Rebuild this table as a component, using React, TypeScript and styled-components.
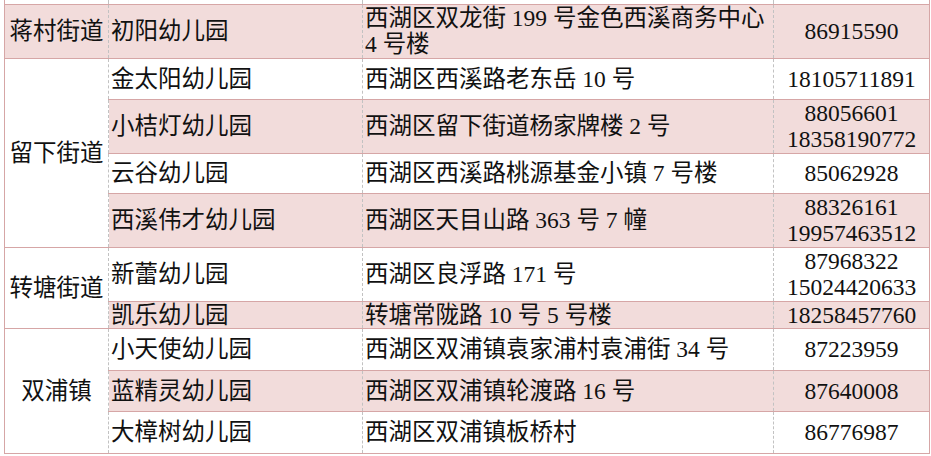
import React from "react";
import styled, { createGlobalStyle } from "styled-components";

const GlobalStyle = createGlobalStyle`
  html, body { margin: 0; padding: 0; background: #ffffff; }
  body {
    font-family: "Liberation Serif", "Noto Sans CJK SC", serif;
    color: #111111;
  }
`;

const ROSE = "#d6a6a6";
const DASH = "#c2c2c2";
const PINK = "#f2dcdb";

const Page = styled.div`
  padding: 0 0 0 4px;
  width: 931px;
  height: 456px;
  box-sizing: border-box;
  overflow: hidden;
`;

const Table = styled.table`
  border-collapse: collapse;
  table-layout: fixed;
  width: 925px;
  font-size: 23.5px;
  line-height: 26px;
`;

const Row = styled.tr<{ $h: number }>`
  height: ${(p) => p.$h}px;
`;

const Cell = styled.td<{ $fill?: boolean }>`
  padding: 0;
  vertical-align: middle;
  white-space: nowrap;
  background: ${(p) => (p.$fill ? PINK : "#ffffff")};
  border-top: 1px solid ${ROSE};
  border-bottom: 1px solid ${ROSE};
  border-left: 1px dashed ${DASH};
  border-right: 1px dashed ${DASH};
`;

const StubCell = styled(Cell)`
  border-top: none;
  height: 3px;
  line-height: 0;
  font-size: 0;
`;

const SectionCell = styled(Cell)`
  text-align: center;
  border-left: 1px solid ${ROSE};
`;

const NameCell = styled(Cell)`
  text-align: left;
  padding-left: 2px;
`;

const AddrCell = styled(Cell)`
  text-align: left;
  padding-left: 2px;
`;

const PhoneCell = styled(Cell)`
  text-align: center;
  border-right: 1px solid ${ROSE};
`;

const Line = styled.div``;

type Entry = { n: string; a: string[]; p: string[]; h: number };
type Section = { name: string; rows: Entry[] };

const sections: Section[] = [
  {
    name: "蒋村街道",
    rows: [
      {
        n: "初阳幼儿园",
        a: ["西湖区双龙街 199 号金色西溪商务中心", "4 号楼"],
        p: ["86915590"],
        h: 54,
      },
    ],
  },
  {
    name: "留下街道",
    rows: [
      { n: "金太阳幼儿园", a: ["西湖区西溪路老东岳 10 号"], p: ["18105711891"], h: 41 },
      {
        n: "小桔灯幼儿园",
        a: ["西湖区留下街道杨家牌楼 2 号"],
        p: ["88056601", "18358190772"],
        h: 54,
      },
      { n: "云谷幼儿园", a: ["西湖区西溪路桃源基金小镇 7 号楼"], p: ["85062928"], h: 40 },
      {
        n: "西溪伟才幼儿园",
        a: ["西湖区天目山路 363 号 7 幢"],
        p: ["88326161", "19957463512"],
        h: 54,
      },
    ],
  },
  {
    name: "转塘街道",
    rows: [
      { n: "新蕾幼儿园", a: ["西湖区良浮路 171 号"], p: ["87968322", "15024420633"], h: 54 },
      { n: "凯乐幼儿园", a: ["转塘常陇路 10 号 5 号楼"], p: ["18258457760"], h: 26 },
    ],
  },
  {
    name: "双浦镇",
    rows: [
      { n: "小天使幼儿园", a: ["西湖区双浦镇袁家浦村袁浦街 34 号"], p: ["87223959"], h: 42 },
      { n: "蓝精灵幼儿园", a: ["西湖区双浦镇轮渡路 16 号"], p: ["87640008"], h: 41 },
      { n: "大樟树幼儿园", a: ["西湖区双浦镇板桥村"], p: ["86776987"], h: 42 },
    ],
  },
];

export default function App() {
  let idx = 0;
  const body: React.ReactNode[] = [];
  sections.forEach((s) => {
    s.rows.forEach((r, i) => {
      const fill = idx % 2 === 0;
      idx += 1;
      body.push(
        <Row key={`${s.name}-${i}`} $h={r.h}>
          {i === 0 && (
            <SectionCell rowSpan={s.rows.length} $fill={s.rows.length === 1 && fill}>
              {s.name}
            </SectionCell>
          )}
          <NameCell $fill={fill}>{r.n}</NameCell>
          <AddrCell $fill={fill}>
            {r.a.map((l) => (
              <Line key={l}>{l}</Line>
            ))}
          </AddrCell>
          <PhoneCell $fill={fill}>
            {r.p.map((l) => (
              <Line key={l}>{l}</Line>
            ))}
          </PhoneCell>
        </Row>
      );
    });
  });

  return (
    <Page>
      <GlobalStyle />
      <Table>
        <colgroup>
          <col style={{ width: 104 }} />
          <col style={{ width: 254 }} />
          <col style={{ width: 411 }} />
          <col style={{ width: 156 }} />
        </colgroup>
        <tbody>
          <Row $h={4}>
            <StubCell style={{ borderLeft: `1px solid ${ROSE}` }} />
            <StubCell />
            <StubCell />
            <StubCell style={{ borderRight: `1px solid ${ROSE}` }} />
          </Row>
          {body}
        </tbody>
      </Table>
    </Page>
  );
}
